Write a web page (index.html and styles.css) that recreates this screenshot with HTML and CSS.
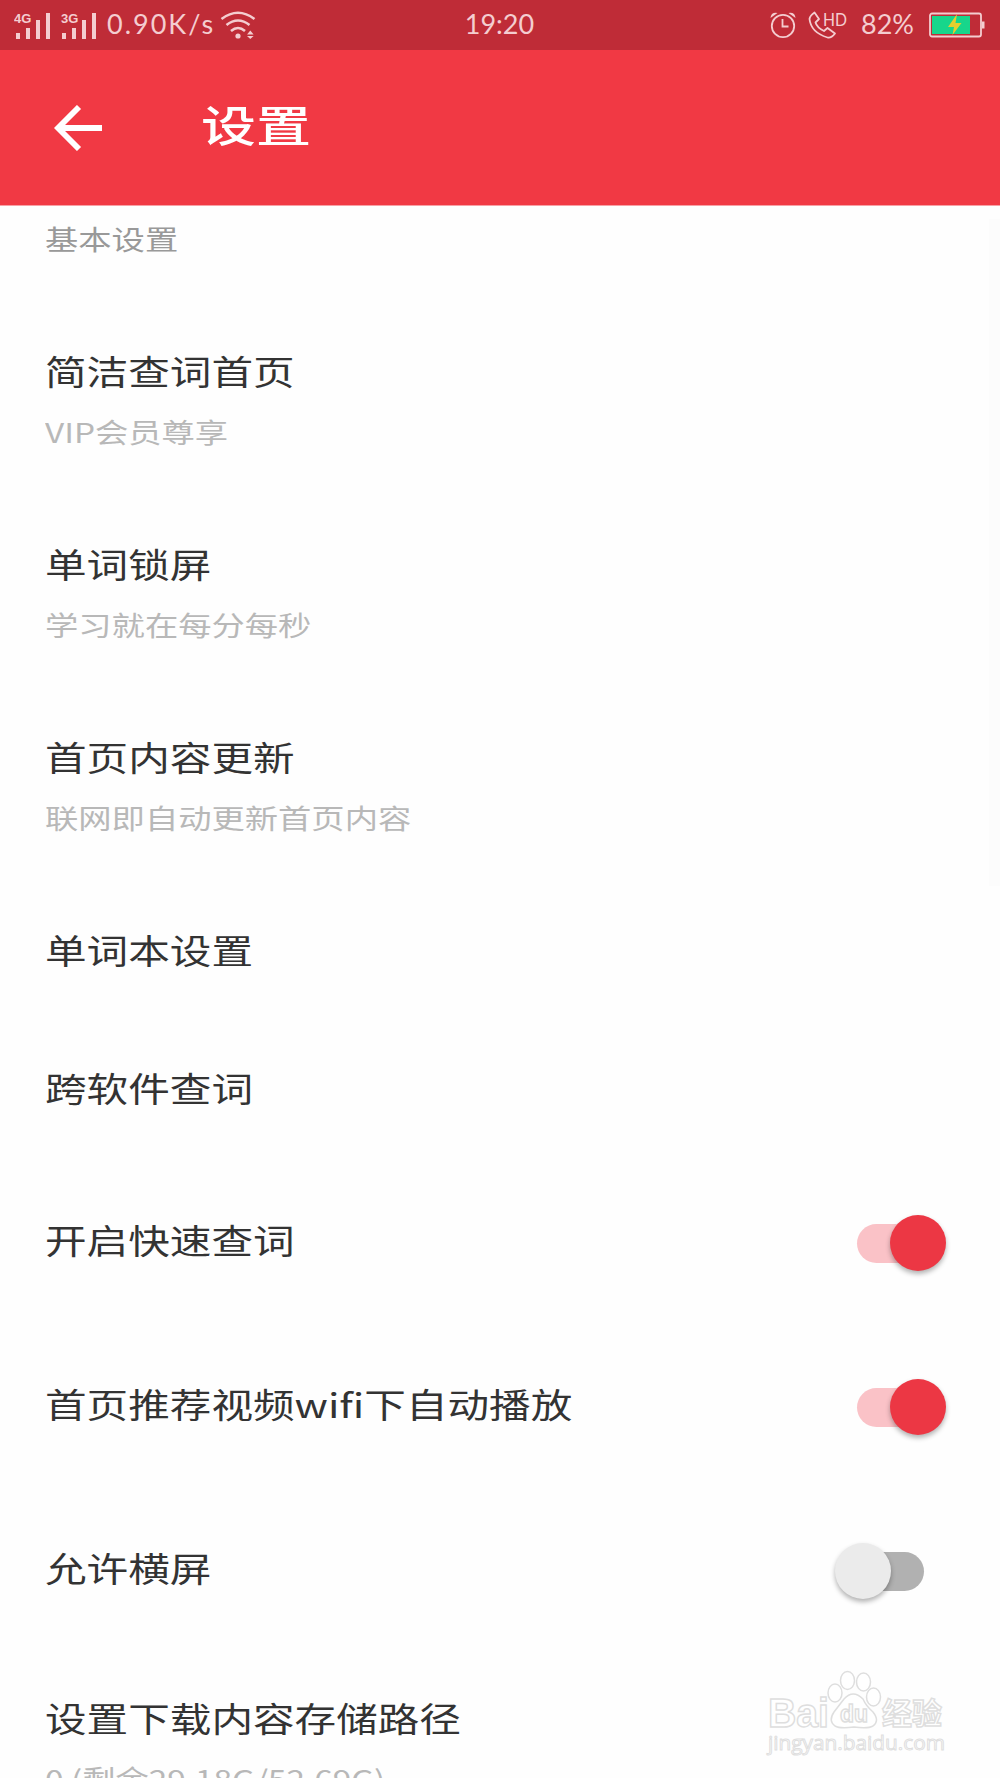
FILE: index.html
```
<!DOCTYPE html>
<html lang="zh-CN">
<head>
    <meta charset="UTF-8">
    <title>设置</title>
    <link rel="stylesheet" href="styles.css">
</head>

<body>
    <div class="status-bar">
        <div class="status-left">
            <svg class="signals" width="84" height="28" viewBox="0 0 84 28">
                <g fill="#f4cdd0">
                    <rect x="2" y="22" width="4" height="6"/>
                    <rect x="12" y="17" width="4" height="11"/>
                    <rect x="22" y="9" width="4" height="19"/>
                    <rect x="32" y="2" width="4" height="26"/>
                    <rect x="48" y="22" width="4" height="6"/>
                    <rect x="58" y="17" width="4" height="11"/>
                    <rect x="68" y="9" width="4" height="19"/>
                    <rect x="78" y="2" width="4" height="26"/>
                    <text x="0" y="12" class="net-type">4G</text>
                    <text x="47" y="12" class="net-type">3G</text>
                </g>
            </svg>
            <span class="speed">0.90K/s</span>
            <svg class="wifi" width="36" height="28" viewBox="0 0 36 28">
                <g fill="none" stroke="#f4cdd0" stroke-width="2.6">
                    <path d="M1.5 8Q18 -4.500 34.500 8"/>
                    <path d="M6.500 14Q18 5 29.500 14"/>
                    <path d="M11 20Q18 14 25 20"/>
                </g>
                <circle cx="18" cy="25" r="2.600" fill="#f4cdd0"/>
                <path d="M27 23.500L30.300 19.500L33.600 23.500ZM27 25L30.300 28L33.600 25Z" fill="#f4cdd0"/>
            </svg>
        </div>
        <span class="time">19:20</span>
        <div class="status-right">
            <svg width="26" height="28" viewBox="0 0 26 28">
                <g fill="none" stroke="#f4cdd0" stroke-width="1.800">
                    <circle cx="13" cy="15" r="11.200"/>
                    <path d="M12.500 8V15.500H18.500"/>
                </g>
                <path d="M.5 7Q1 1 7.500 2Z" fill="#f4cdd0"/>
                <path d="M25.500 7Q25 1 18.500 2Z" fill="#f4cdd0"/>
            </svg>
            <svg class="call" width="40" height="28" viewBox="0 0 40 28">
                <path d="M6.500 1.500L11 8L7.500 11.500Q9 16.500 16 20L19.500 17L27 22.500Q23 27.500 19.500 26.500Q3 21.500 1.500 8Q2 4.500 6.500 1.500Z" fill="none" stroke="#f4cdd0" stroke-width="1.800" stroke-linejoin="round"/>
                <text x="15" y="15" class="hd" textLength="24" lengthAdjust="spacingAndGlyphs">HD</text>
            </svg>
            <span class="percent">82%</span>
            <svg width="56" height="26" viewBox="0 0 56 26">
                <rect x="1" y="1.500" width="51" height="23" rx="2" fill="none" stroke="#f4cdd0" stroke-width="1.800"/>
                <rect x="3" y="4" width="38" height="18" fill="#17d68b"/>
                <path d="M28 2L19 15H25L23.500 23L32.500 11H26.500Z" fill="#e6cf2e"/>
                <rect x="53" y="9.500" width="2.500" height="7" fill="#f4cdd0"/>
            </svg>
        </div>
    </div>

    <div class="header">
        <svg class="back" width="48" height="46" viewBox="0 0 48 46">
            <path d="M25 2L4 23L25 44M4 23H48" fill="none" stroke="#fff" stroke-width="5.800"/>
        </svg>
        <h1 class="page-title">设置</h1>
    </div>

    <div class="settings">
        <div class="section-name">基本设置</div>

        <div class="item">
            <div class="item-title">简洁查词首页</div>
            <div class="item-desc">VIP会员尊享</div>
        </div>
        <div class="item">
            <div class="item-title">单词锁屏</div>
            <div class="item-desc">学习就在每分每秒</div>
        </div>
        <div class="item">
            <div class="item-title">首页内容更新</div>
            <div class="item-desc">联网即自动更新首页内容</div>
        </div>
        <div class="item">
            <div class="item-title">单词本设置</div>
        </div>
        <div class="item">
            <div class="item-title">跨软件查词</div>
        </div>
        <div class="item item-switch">
            <div class="item-title">开启快速查词</div>
            <div class="switch on"><div class="thumb"></div></div>
        </div>
        <div class="item item-switch">
            <div class="item-title">首页推荐视频wifi下自动播放</div>
            <div class="switch on"><div class="thumb"></div></div>
        </div>
        <div class="item item-switch">
            <div class="item-title">允许横屏</div>
            <div class="switch"><div class="thumb"></div></div>
        </div>
        <div class="item">
            <div class="item-title">设置下载内容存储路径</div>
            <div class="item-desc">0 (剩余29.18G/52.69G)</div>
        </div>
    </div>

    <div class="scrollbar"></div>

    <!-- Watermark -->
    <svg class="watermark" width="184" height="90" viewBox="0 0 184 90">
        <g fill="#fff" stroke="#dedede" stroke-width="1.500">
            <text x="3" y="57" class="wm-bai" textLength="61" lengthAdjust="spacingAndGlyphs">Bai</text>
            <ellipse cx="70" cy="23" rx="7" ry="9"/>
            <ellipse cx="82.500" cy="10.500" rx="7" ry="9"/>
            <ellipse cx="98.500" cy="12" rx="7" ry="9"/>
            <ellipse cx="108.500" cy="27" rx="7" ry="9"/>
            <path d="M79 29Q88 19 98 29Q101 36 108 42Q115 51 108 56Q103 59 89 57Q75 59 70 56Q63 51 69 42Z"/>
            <text x="75" y="52" class="wm-du" textLength="28" lengthAdjust="spacingAndGlyphs">du</text>
            <text x="117" y="54" class="wm-cn" textLength="60">经验</text>
            <text x="3" y="80" class="wm-url" textLength="177" lengthAdjust="spacingAndGlyphs">jingyan.baidu.com</text>
        </g>
    </svg>
</body>
</html>
```

FILE: styles.css
```
body {
    margin: 0;
    position: relative;
    height: 1778px;
    overflow: hidden;
    background-color: #fefefe;
    font-family: "Noto Sans CJK SC", sans-serif;
}

/* Status bar */
.status-bar {
    display: grid;
    grid-template-columns: 1fr auto 1fr;
    align-items: center;
    height: 50px;
    padding: 0 15px 0 14px;
    background-color: #bf2c37;
    color: #f4cdd0;
    font-family: Lato, "Open Sans", sans-serif;
    font-size: 27px;
    font-weight: 400;
    line-height: 46px;
}

.status-bar span {
    margin-top: -2px;
}

.status-left,
.status-right {
    display: flex;
    align-items: center;
}

.status-right {
    justify-content: flex-end;
}

.status-bar .speed {
    width: 107px;
    margin-left: 9px;
    letter-spacing: 2px;
    white-space: nowrap;
}

.wifi {
    margin-left: 6px;
}

.call {
    margin-left: 12px;
    overflow: visible;
}

.status-bar .percent {
    width: 55px;
    margin: -2px 13px 0 13px;
    white-space: nowrap;
}

.net-type {
    font-family: "Liberation Sans", sans-serif;
    font-size: 13px;
    font-weight: bold;
}

.hd {
    font-family: Lato, sans-serif;
    font-size: 18px;
    font-weight: 400;
    fill: #f4cdd0;
}

/* Header */
.header {
    display: flex;
    align-items: center;
    height: 155px;
    padding-left: 54px;
    background-color: #f13944;
    border-bottom: 1px solid #f8a0a5;
}

.page-title {
    margin: -9px 0 0 99px;
    color: #fff;
    font-size: 55px;
    font-weight: 500;
    line-height: 70px;
    transform: scaleY(0.79);
}

/* Settings list */
.section-name {
    height: 96px;
    padding-left: 45px;
    color: #999;
    font-size: 33.3px;
    line-height: 66px;
    transform: scaleY(0.82);
    transform-origin: 0 33px;
}

.item {
    padding: 44px 45px 45px;
}

.item-title {
    padding-bottom: 1px;
    color: #333;
    font-size: 41.6px;
    line-height: 48px;
    white-space: nowrap;
    transform: scaleY(0.81);
}

.item-desc {
    margin-top: 17px;
    margin-bottom: -2px;
    color: #b8b8b8;
    font-size: 33.3px;
    line-height: 40px;
    white-space: nowrap;
    transform: scaleY(0.82);
}

.item-switch {
    display: flex;
    justify-content: space-between;
    align-items: center;
    box-sizing: border-box;
    height: 164px;
    padding: 0 76px 0 45px;
}

.switch {
    position: relative;
    width: 67px;
    height: 39px;
    margin-top: 9px;
    border-radius: 20px;
    background-color: #b1b1b1;
}

.thumb {
    position: absolute;
    top: -9px;
    left: -22px;
    width: 56px;
    height: 56px;
    border-radius: 50%;
    background-color: #ebebeb;
    box-shadow: 0 3px 5px rgba(0, 0, 0, 0.3);
}

.switch.on {
    background-color: #fac2c7;
}

.switch.on .thumb {
    left: 33px;
    background-color: #ec3744;
}

.scrollbar {
    position: absolute;
    top: 219px;
    right: 0;
    width: 11px;
    height: 667px;
    background-color: #fcfcfc;
}

/* Watermark */
.watermark {
    position: absolute;
    left: 765px;
    top: 1670px;
    font-weight: bold;
}

.wm-bai {
    font-family: "Liberation Sans", sans-serif;
    font-size: 41px;
}

.wm-du {
    font-family: "Liberation Sans", sans-serif;
    font-size: 24px;
}

.wm-cn {
    font-size: 30px;
}

.wm-url {
    font-family: "Open Sans", sans-serif;
    font-size: 20px;
    font-weight: 400;
    stroke-width: 1px;
}
```
